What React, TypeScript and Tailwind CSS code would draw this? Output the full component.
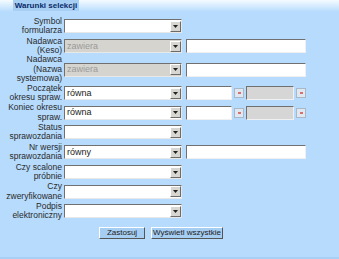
import React from "react";

const Arrow = () => (
  <div className="w-[11px] h-[11px] bg-[#d8d6d0] border border-t-white border-l-white border-r-[#6b6b6b] border-b-[#6b6b6b] flex items-center justify-center">
    <svg width="5" height="3" viewBox="0 0 5 3">
      <path d="M0 0h5L2.5 3z" fill="#222" />
    </svg>
  </div>
);

const Select = ({ value, disabled }: { value?: string; disabled?: boolean }) => (
  <div
    className={`w-[118px] h-[14px] flex items-center border border-t-[#707070] border-l-[#707070] border-r-[#e8e8e8] border-b-[#e8e8e8] ${
      disabled ? "bg-[#d6d4cf] text-[#9a9a9a]" : "bg-white text-[#222]"
    }`}
  >
    <span className="flex-1 pl-[2px] leading-none">{value}</span>
    <Arrow />
  </div>
);

const Input = ({ w, gray }: { w: string; gray?: boolean }) => (
  <div
    className={`${w} h-[14px] border border-t-[#707070] border-l-[#707070] border-r-[#f0f0f0] border-b-[#f0f0f0] ${
      gray ? "bg-[#d6d6d6]" : "bg-white"
    }`}
  />
);

const Cal = () => (
  <div className="w-[10px] h-[10px] bg-[#dfe7f0] border border-[#a9b8c8] flex items-center justify-center">
    <div className="w-[3px] h-[2px] bg-[#d87070]" />
  </div>
);

type Row = { label: string[]; value?: string; disabled?: boolean; extra?: "text" | "date"; h: string };

const rows: Row[] = [
  { label: ["Symbol", "formularza"], h: "h-[20px]" },
  { label: ["Nadawca", "(Keso)"], value: "zawiera", disabled: true, extra: "text", h: "h-[20px]" },
  { label: ["Nadawca", "(Nazwa", "systemowa)"], value: "zawiera", disabled: true, extra: "text", h: "h-[27px]" },
  { label: ["Początek", "okresu spraw."], value: "równa", extra: "date", h: "h-[20px]" },
  { label: ["Koniec okresu", "spraw."], value: "równa", extra: "date", h: "h-[19px]" },
  { label: ["Status", "sprawozdania"], h: "h-[20px]" },
  { label: ["Nr wersji", "sprawozdania"], value: "równy", extra: "text", h: "h-[20px]" },
  { label: ["Czy scalone", "próbnie"], h: "h-[20px]" },
  { label: ["Czy", "zweryfikowane"], h: "h-[19px]" },
  { label: ["Podpis", "elektroniczny"], h: "h-[20px]" },
];

export default function App() {
  return (
    <div className="w-[339px] h-[259px] bg-[#b6dbfd] flex flex-col font-['Liberation_Sans',sans-serif] text-[9px] text-[#333] border-b-2 border-[#a9d0f4]">
      {/* Header */}
      <div className="h-[12px] bg-gradient-to-b from-[#f4fbff] to-[#b6dbfd] pl-[13px]">
        <div className="w-[66px] h-[11px] bg-[#a6cff3] text-[#0a2a6a] font-bold text-[8px] flex items-center justify-center leading-none whitespace-nowrap">
          Warunki selekcji
        </div>
      </div>

      {/* Fields */}
      <div className="flex flex-col pt-[4px]">
        {rows.map((r, i) => (
          <div key={i} className={`flex items-center ${r.h}`}>
            <div className="w-[62px] text-right text-[8.5px] leading-[9.5px] text-[#2a2a2a]">
              {r.label.map((l, j) => (
                <div key={j}>{l}</div>
              ))}
            </div>
            <div className="ml-[2px] flex items-center gap-[4px]">
              <Select value={r.value} disabled={r.disabled} />
              {r.extra === "text" && <Input w="w-[120px]" />}
              {r.extra === "date" && (
                <div className="flex items-center gap-[2px]">
                  <Input w="w-[46px]" />
                  <Cal />
                  <Input w="w-[48px]" gray />
                  <Cal />
                </div>
              )}
            </div>
          </div>
        ))}
      </div>

      {/* Buttons */}
      <div className="flex justify-start gap-[6px] pl-[99px] pt-[6px]">
        <button className="w-[46px] h-[12px] bg-[#a6cdf2] border border-t-white border-l-white border-r-[#555] border-b-[#555] text-[8px] leading-none text-[#222]">
          Zastosuj
        </button>
        <button className="w-[72px] h-[12px] bg-[#a6cdf2] border border-t-white border-l-white border-r-[#555] border-b-[#555] text-[8px] leading-none text-[#222]">
          Wyświetl wszystkie
        </button>
      </div>
    </div>
  );
}
